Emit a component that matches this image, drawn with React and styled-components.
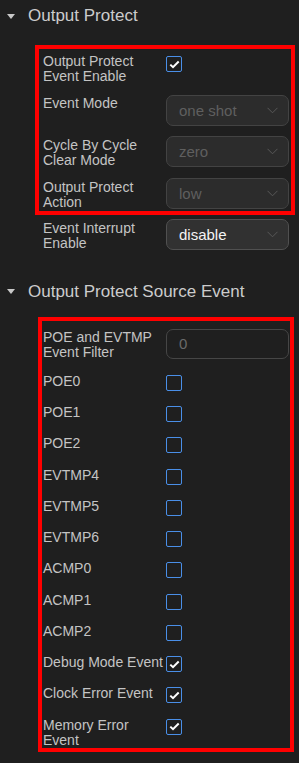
import styled, { createGlobalStyle } from 'styled-components';

const Global = createGlobalStyle`
  html, body {
    margin: 0;
    padding: 0;
    background: #1f1f1f;
  }
  body {
    font-family: "Liberation Sans", Arial, sans-serif;
  }
`

const Page = styled.div`
  width: 299px;
  min-height: 763px;
  background: #1f1f1f;
  display: flex;
  flex-direction: column;
`

const Header = styled.div`
  height: 32px;
  display: flex;
  align-items: center;
  gap: 13px;
  padding-left: 7px;
  margin-top: ${p => p.$top || 0}px;
  color: #cccccc;
  font-size: 17px;
  line-height: 20px;
`

const Row = styled.div`
  display: grid;
  grid-template-columns: 123px 123px;
  align-items: start;
  margin-top: ${p => p.$top || 0}px;
  padding-left: ${p => p.$indent || 0}px;
`

const Box = styled.div`
  margin-left: ${p => p.$left}px;
  margin-top: ${p => p.$top}px;
  width: ${p => p.$width}px;
  box-sizing: border-box;
  border: 4px solid #ff0000;
  padding: ${p => p.$pad};
  display: flex;
  flex-direction: column;
  gap: ${p => p.$gap}px;
`

const Label = styled.div`
  color: #c4c4c4;
  font-size: 14px;
  line-height: 15px;
  padding-top: ${p => p.$offset || 0}px;
`

const Check = styled.span`
  width: 16px;
  height: 16px;
  box-sizing: border-box;
  border: 1.5px solid #4a8fe8;
  border-radius: 2px;
  margin-top: ${p => p.$offset || 1}px;
  display: flex;
  align-items: center;
  justify-content: center;
`

const Select = styled.div`
  height: 31px;
  box-sizing: border-box;
  border: 1px solid ${p => (p.$disabled ? '#434343' : '#505050')};
  background: ${p => (p.$disabled ? '#2c2c2c' : '#313131')};
  border-radius: 7px;
  display: flex;
  align-items: center;
  justify-content: space-between;
  padding: 0 10px 0 12px;
  color: ${p => (p.$disabled ? '#5f5f5f' : '#f4f4f4')};
  font-size: 15px;
`

const Input = styled.div`
  height: ${p => p.$height}px;
  box-sizing: border-box;
  border: 1px solid #464646;
  border-radius: 7px;
  display: flex;
  align-items: center;
  padding-left: 12px;
  color: #6a6a6a;
  font-size: 15px;
`

function Caret() {
  return (
    <svg width="8" height="5" viewBox="0 0 8 5">
      <polygon points="0,0 8,0 4,5" fill="#c8c8c8" />
    </svg>
  )
}

function Chevron() {
  return (
    <svg width="11" height="7" viewBox="0 0 11 7">
      <polyline points="0.5,0.8 5.5,5.8 10.5,0.8" fill="none" stroke="#585858" strokeWidth="1" />
    </svg>
  )
}

function CheckBox({ checked, offset }) {
  return (
    <Check $offset={offset}>
      {checked && (
        <svg width="11" height="9" viewBox="0 0 11 9">
          <polyline points="1.3,4.6 4,7.2 9.7,1.5" fill="none" stroke="#ffffff" strokeWidth="2" />
        </svg>
      )}
    </Check>
  )
}

const sources = [
  ['POE0', false],
  ['POE1', false],
  ['POE2', false],
  ['EVTMP4', false],
  ['EVTMP5', false],
  ['EVTMP6', false],
  ['ACMP0', false],
  ['ACMP1', false],
  ['ACMP2', false],
  ['Debug Mode Event', true],
  ['Clock Error Event', true],
  ['Memory Error Event', true],
]

export default function App() {
  return (
    <Page>
      <Global />
      <Header>
        <Caret />
        Output Protect
      </Header>

      <Box $left={35} $top={13} $width={260} $pad="5px 2px 1.5px 4px" $gap={10.5}>
        <Row>
          <Label>Output Protect Event Enable</Label>
          <CheckBox checked offset={2} />
        </Row>
        <Row>
          <Label $offset={1.5}>Event Mode</Label>
          <Select $disabled>one shot<Chevron /></Select>
        </Row>
        <Row>
          <Label $offset={1.5}>Cycle By Cycle Clear Mode</Label>
          <Select $disabled>zero<Chevron /></Select>
        </Row>
        <Row>
          <Label $offset={1.5}>Output Protect Action</Label>
          <Select $disabled>low<Chevron /></Select>
        </Row>
      </Box>

      <Row $top={4} $indent={43}>
        <Label $offset={1.5}>Event Interrupt Enable</Label>
        <Select>disable<Chevron /></Select>
      </Row>

      <Header $top={25}>
        <Caret />
        Output Protect Source Event
      </Header>

      <Box $left={38} $top={9} $width={256} $pad="8px 1px 0 1px" $gap={14.27}>
        <Row>
          <Label $offset={1}>POE and EVTMP Event Filter</Label>
          <Input $height={30}>0</Input>
        </Row>
        {sources.map(([name, on]) => (
          <Row key={name}>
            <Label>{name}</Label>
            <CheckBox checked={on} />
          </Row>
        ))}
      </Box>
    </Page>
  )
}
